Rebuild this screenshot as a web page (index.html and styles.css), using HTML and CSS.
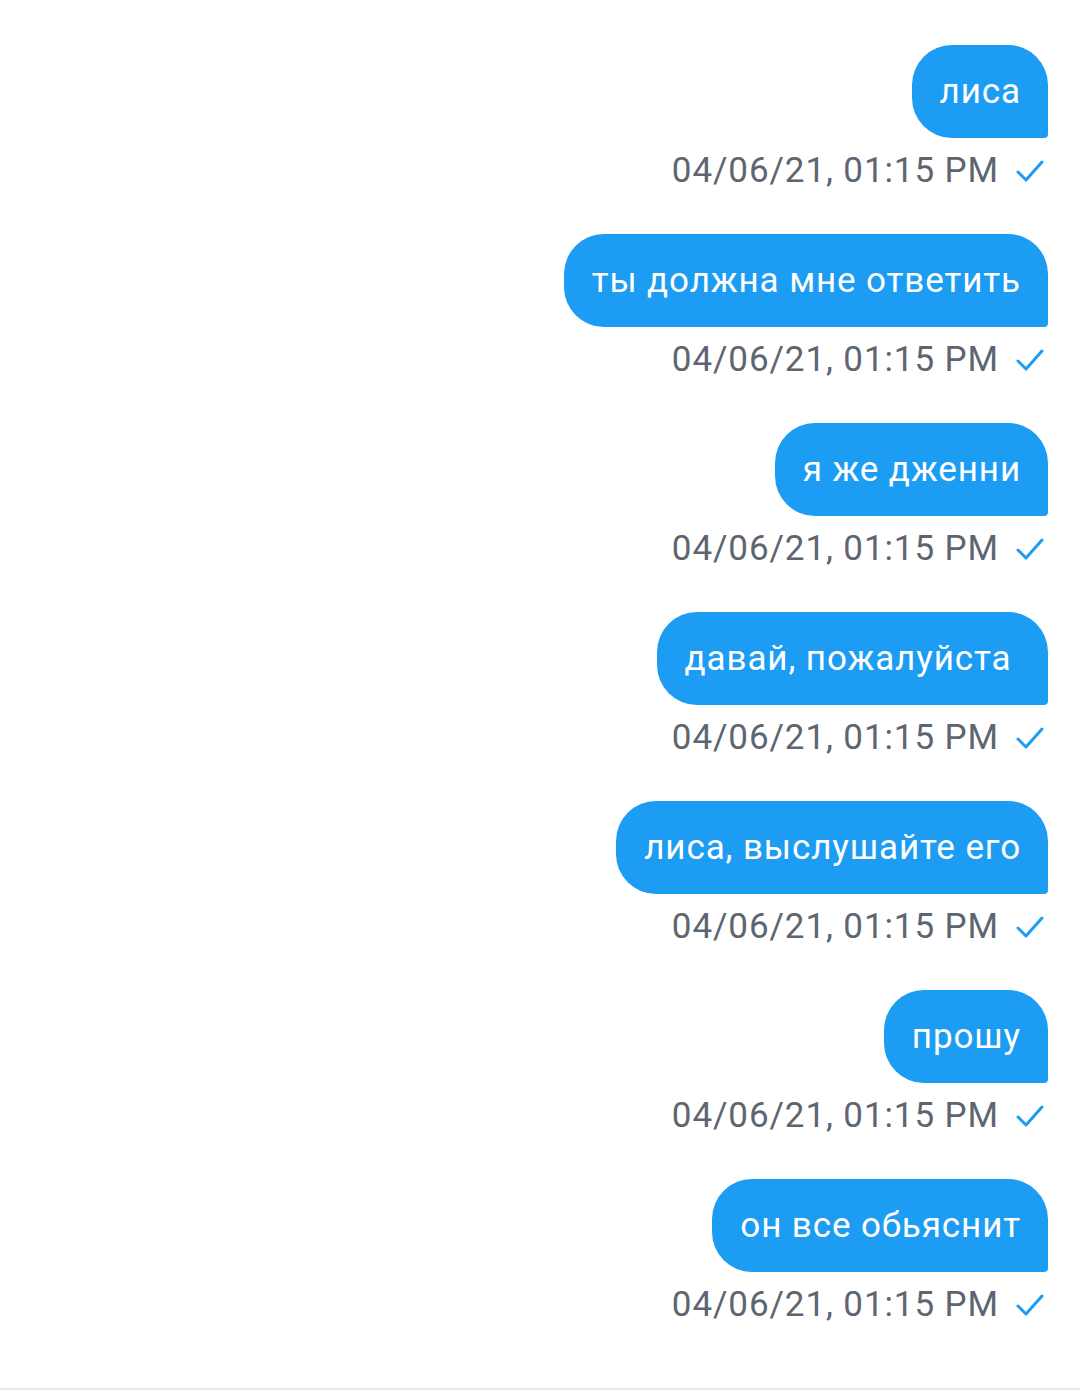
FILE: index.html
```html
<!DOCTYPE html>
<html>
<head>
<meta charset="utf-8">
<link rel="stylesheet" href="styles.css">
</head>
<body>
<div class="chat">
  <div class="msg"><div class="bubble">лиса</div><div class="meta"><span class="time">04/06/21, 01:15 PM</span><svg class="check" viewBox="0 0 28 24"><path d="M2 13 L10 21 L26 3"/></svg></div></div>
  <div class="msg"><div class="bubble">ты должна мне ответить</div><div class="meta"><span class="time">04/06/21, 01:15 PM</span><svg class="check" viewBox="0 0 28 24"><path d="M2 13 L10 21 L26 3"/></svg></div></div>
  <div class="msg"><div class="bubble">я же дженни</div><div class="meta"><span class="time">04/06/21, 01:15 PM</span><svg class="check" viewBox="0 0 28 24"><path d="M2 13 L10 21 L26 3"/></svg></div></div>
  <div class="msg"><div class="bubble">давай, пожалуйста&nbsp;</div><div class="meta"><span class="time">04/06/21, 01:15 PM</span><svg class="check" viewBox="0 0 28 24"><path d="M2 13 L10 21 L26 3"/></svg></div></div>
  <div class="msg"><div class="bubble">лиса, выслушайте его</div><div class="meta"><span class="time">04/06/21, 01:15 PM</span><svg class="check" viewBox="0 0 28 24"><path d="M2 13 L10 21 L26 3"/></svg></div></div>
  <div class="msg"><div class="bubble">прошу</div><div class="meta"><span class="time">04/06/21, 01:15 PM</span><svg class="check" viewBox="0 0 28 24"><path d="M2 13 L10 21 L26 3"/></svg></div></div>
  <div class="msg"><div class="bubble">он все обьяснит</div><div class="meta"><span class="time">04/06/21, 01:15 PM</span><svg class="check" viewBox="0 0 28 24"><path d="M2 13 L10 21 L26 3"/></svg></div></div>
</div>
<div class="bottom-line"></div>
</body>
</html>
```
FILE: styles.css
```css
html, body {
  margin: 0;
  padding: 0;
  background: #ffffff;
}
body {
  width: 1080px;
  height: 1396px;
  position: relative;
  font-family: Roboto, "Noto Sans", sans-serif;
}
.chat {
  display: flex;
  flex-direction: column;
  align-items: flex-end;
  padding: 45px 32px 0 0;
}
.msg {
  display: flex;
  flex-direction: column;
  align-items: flex-end;
  height: 189px;
}
.bubble {
  background: #1d9cf3;
  color: #ffffff;
  font-size: 35px;
  letter-spacing: 0.9px;
  line-height: 93px;
  height: 93px;
  padding: 0 27px 0 28px;
  border-radius: 40px 40px 4px 40px;
  white-space: pre;
}
.meta {
  display: flex;
  align-items: center;
  margin-top: 13px;
  height: 40px;
}
.time {
  color: #5d6670;
  font-size: 35px;
  letter-spacing: 0.9px;
  line-height: 40px;
}
.check {
  width: 28px;
  height: 24px;
  margin-left: 17px;
  margin-right: 4px;
  fill: none;
  stroke: #1d9cf3;
  stroke-width: 3;
  stroke-linecap: round;
  stroke-linejoin: round;
}
.bottom-line {
  position: absolute;
  left: 0;
  right: 0;
  top: 1388px;
  height: 2px;
  background: #e9e6ec;
}
```
